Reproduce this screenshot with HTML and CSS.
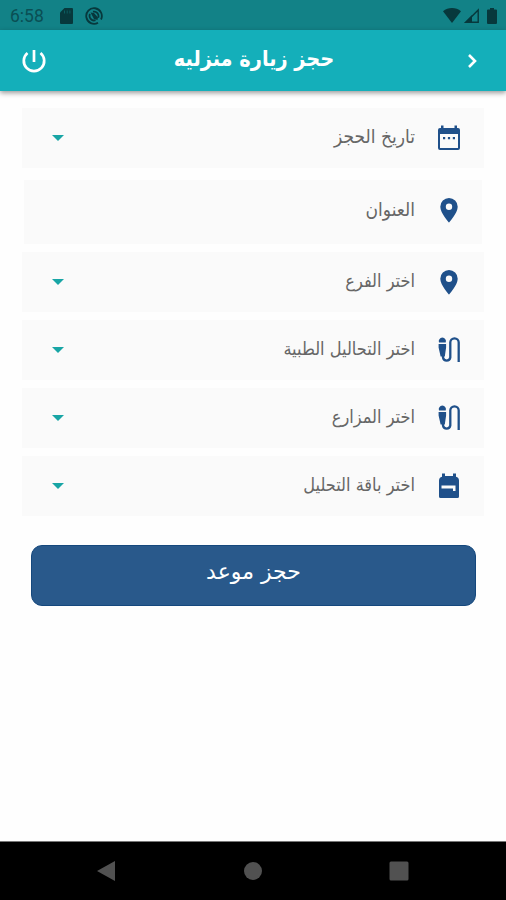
FILE: index.html
```html
<!DOCTYPE html>
<html lang="ar" dir="rtl">
<head>
    <meta charset="UTF-8">
    <meta name="viewport" content="width=device-width, initial-scale=1.0">
    <title>حجز زيارة منزليه</title>
    <link rel="stylesheet" href="styles.css">
</head>
<body>
    <div class="status-bar" dir="ltr">
        <span class="clock">6:58</span>
        <svg class="sd-icon" viewBox="0 0 13 16"><path d="M4.5 0H12a1 1 0 0 1 1 1v14a1 1 0 0 1-1 1H1a1 1 0 0 1-1-1V4.5z"/><path class="slots" d="M4.5 2.5v3M7.2 2.5v3M9.9 2.5v3"/></svg>
        <svg class="sync-icon" viewBox="0 0 18 18"><path class="ring" d="M13 15.7A7.8 7.8 0 1 1 16 12.500M5 7a4.500 4.500 0 0 0 5.500 6.200M8 4.700a4.500 4.500 0 0 1 5.200 6"/><path d="M5.500 5.500L9 6l4 4.500-.5 2.500L9 12z"/></svg>
        <svg class="wifi-icon" viewBox="0 0 18 15"><path d="M0 3.2C5-1 13-1 18 3.2L9 15z"/></svg>
        <svg class="signal-icon" viewBox="0 0 15 15"><path d="M0 15L8 7v8z"/><path class="outline" d="M2 14.2L14.2 2v12.2z"/></svg>
        <svg class="battery-icon" viewBox="0 0 10 16"><path d="M3 0h4v1.500h2a1 1 0 0 1 1 1v12.500a1 1 0 0 1-1 1H1a1 1 0 0 1-1-1V2.500a1 1 0 0 1 1-1h2z"/></svg>
    </div>

    <header class="app-bar">
        <svg class="back-icon" viewBox="0 0 10 14"><path d="M2 1L8 7 2 13"/></svg>
        <h1>حجز زيارة منزليه</h1>
        <svg class="power-icon" viewBox="0 0 24 24"><path d="M12 1v12M5.500 4a10.200 10.200 0 1 0 13 0"/></svg>
    </header>

    <main class="form">
        <div class="field date-field">
            <svg class="icon" viewBox="0 0 24 26"><path d="M4 .5h2.500V3h11V.5H20V3h1a2 2 0 0 1 2 2v18a2 2 0 0 1-2 2H3a2 2 0 0 1-2-2V5a2 2 0 0 1 2-2h1zM3 9v14h18V9zM6 12h2.200v2.200H6zm4.900 0h2.200v2.200h-2.200zm4.900 0H18v2.200h-2.200z" fill-rule="evenodd"/></svg>
            <span class="label">تاريخ الحجز</span>
            <span class="arrow"></span>
        </div>
        <div class="field address-field">
            <svg class="icon" viewBox="0 0 24 26"><path d="M12 1a8.700 8.700 0 0 0-8.700 8.700C3.300 16 12 25.500 12 25.500s8.700-9.500 8.700-15.800A8.700 8.700 0 0 0 12 1zm0 5.600a3.200 3.200 0 1 1 0 6.400 3.200 3.200 0 0 1 0-6.400z"/></svg>
            <span class="label">العنوان</span>
        </div>
        <div class="field">
            <svg class="icon" viewBox="0 0 24 26"><path d="M12 1a8.700 8.700 0 0 0-8.700 8.700C3.300 16 12 25.500 12 25.500s8.700-9.500 8.700-15.800A8.700 8.700 0 0 0 12 1zm0 5.600a3.200 3.200 0 1 1 0 6.400 3.200 3.200 0 0 1 0-6.400z"/></svg>
            <span class="label">اختر الفرع</span>
            <span class="arrow"></span>
        </div>
        <div class="field">
            <svg class="icon" viewBox="0 0 24 26"><path d="M2 5.500a3.600 3.600 0 1 1 6.700 0zM1.600 7h7.500v3.500L7.800 19.500H3.600L1.600 10.500z"/><path class="cable" d="M6 18v2.500a3.700 3.700 0 0 0 7.300 0V5.500a4.200 4.200 0 0 1 8.400 0V25"/></svg>
            <span class="label">اختر التحاليل الطبية</span>
            <span class="arrow"></span>
        </div>
        <div class="field">
            <svg class="icon" viewBox="0 0 24 26"><path d="M2 5.500a3.600 3.600 0 1 1 6.700 0zM1.600 7h7.500v3.500L7.800 19.500H3.600L1.600 10.500z"/><path class="cable" d="M6 18v2.500a3.700 3.700 0 0 0 7.300 0V5.500a4.200 4.200 0 0 1 8.400 0V25"/></svg>
            <span class="label">اختر المزارع</span>
            <span class="arrow"></span>
        </div>
        <div class="field">
            <svg class="icon" viewBox="0 0 24 26"><path d="M5 .5h3V3h8V.5h3v3.200A4 4 0 0 1 22 7.500v16a1.500 1.500 0 0 1-1.500 1.500h-17A1.500 1.500 0 0 1 2 23.500v-16a4 4 0 0 1 3-3.800zM4.500 12.500v3H16v2.500h2.500v-5.500z" fill-rule="evenodd"/></svg>
            <span class="label">اختر باقة التحليل</span>
            <span class="arrow"></span>
        </div>

        <button class="submit">حجز موعد</button>
    </main>

    <nav class="nav-bar" dir="ltr">
        <svg viewBox="0 0 20 20"><path d="M1 10L19 0v20z"/></svg>
        <svg viewBox="0 0 20 20"><circle cx="10" cy="10" r="9"/></svg>
        <svg viewBox="0 0 20 20"><rect x=".5" y=".5" width="19" height="19" rx="1.500"/></svg>
    </nav>
</body>
</html>
```
FILE: styles.css
```css
* {
    box-sizing: border-box;
}

body {
    margin: 0;
    height: 900px;
    display: flex;
    flex-direction: column;
    background-color: #fefefe;
    font-family: "DejaVu Sans Condensed", "DejaVu Sans", sans-serif;
    font-stretch: condensed;
    overflow: hidden;
}

svg {
    display: block;
    flex: none;
}

/* Status bar */
.status-bar {
    display: flex;
    align-items: center;
    height: 30px;
    padding: 1px 9px 0 10px;
    background-color: #128287;
    fill: #07383c;
}

.clock {
    width: 50px;
    font-family: Roboto, sans-serif;
    font-stretch: normal;
    font-size: 17.5px;
    color: #0a4f54;
}

.sd-icon {
    width: 13px;
    height: 16px;
}

.slots {
    stroke: #128287;
    stroke-width: 0.5;
}

.sync-icon {
    width: 18px;
    height: 18px;
    margin-left: 12px;
}

.ring {
    fill: none;
    stroke: #07383c;
    stroke-width: 1.8;
}

.wifi-icon {
    width: 18px;
    height: 15px;
    margin-left: auto;
}

.signal-icon {
    width: 15px;
    height: 15px;
    margin-left: 3px;
}

.outline {
    fill: none;
    stroke: #07383c;
    stroke-width: 1.4;
}

.battery-icon {
    width: 10px;
    height: 16px;
    margin-left: 8px;
}

/* App bar */
.app-bar {
    display: flex;
    align-items: center;
    justify-content: space-between;
    height: 61px;
    padding: 0 29px 0 22px;
    background-color: #14afba;
    box-shadow: 0 2px 5px rgba(0, 0, 0, 0.4);
    fill: none;
    stroke: white;
}

.app-bar h1 {
    margin: 0 5px 4px 0;
    font-size: 21.5px;
    font-weight: bold;
    line-height: 30px;
    white-space: nowrap;
    color: white;
    stroke: none;
}

.back-icon {
    width: 10px;
    height: 14px;
    stroke-width: 2.6;
}

.power-icon {
    width: 24px;
    height: 24px;
    stroke-width: 2.7;
}

/* Form */
.form {
    flex: 1;
    display: flex;
    flex-direction: column;
    gap: 8px;
    padding: 17px 22px 0;
}

.field {
    display: flex;
    align-items: center;
    height: 60px;
    padding: 0 23px 0 30px;
    background-color: #fafafa;
}

.date-field {
    margin-bottom: 4px;
}

.address-field {
    height: 64px;
    margin: 0 2px;
    padding: 0 21px 4px 28px;
}

.icon {
    width: 24px;
    height: 26px;
    fill: #1f508a;
}

.cable {
    fill: none;
    stroke: #1f508a;
    stroke-width: 2.3;
}

.label {
    margin-right: 22px;
    padding-bottom: 3px;
    font-size: 18px;
    line-height: 24px;
    white-space: nowrap;
    color: #666;
}

.date-field .label,
.address-field .label {
    font-size: 19px;
}

.date-field .label {
    padding-bottom: 5px;
}

.arrow {
    margin-right: auto;
    border: 6px solid transparent;
    border-top-color: #18a5a5;
    border-bottom: 0;
}

.submit {
    height: 61px;
    margin: 21px 8px 0 9px;
    padding: 0 0 8px;
    border: 1px solid #15487d;
    border-radius: 11px;
    background-color: #29598b;
    color: white;
    font-family: "DejaVu Sans", sans-serif;
    font-size: 22px;
}

/* Navigation bar */
.nav-bar {
    display: flex;
    justify-content: space-between;
    height: 59px;
    padding: 19px 97px 0 96px;
    border-top: 1px solid #777;
    background-color: black;
    fill: #515151;
}

.nav-bar svg {
    width: 20px;
    height: 20px;
}
```
